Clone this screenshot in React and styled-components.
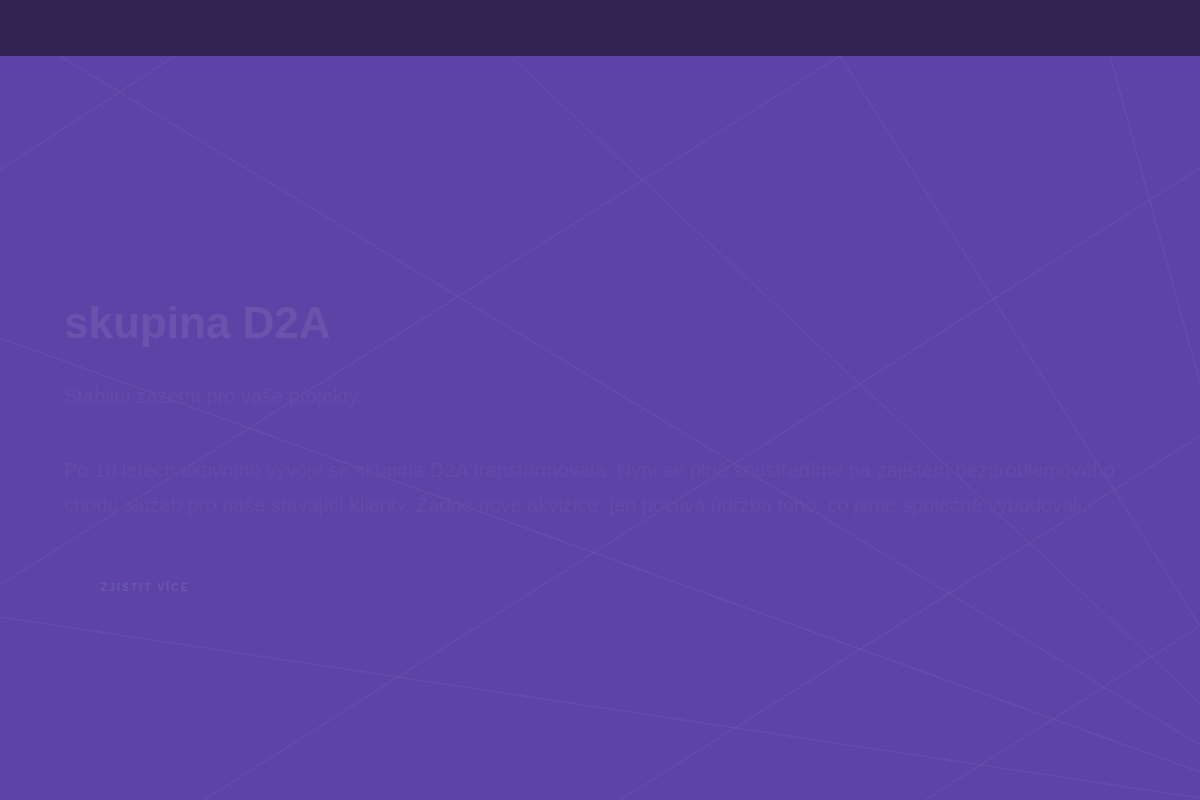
import React from 'react';
import styled, { createGlobalStyle } from 'styled-components';

// background mesh, in page coordinates (hero starts at y = 56)
const meshLines = [
  [60, 56, 1200, 745],
  [175, 56, 0, 170],
  [840, 56, 0, 585],
  [510, 56, 1200, 703],
  [840, 56, 1200, 626],
  [1110, 56, 1200, 383],
  [1200, 168, 204, 800],
  [0, 338, 1200, 772],
  [1200, 436, 620, 800],
  [0, 617, 1200, 798],
  [1200, 626, 925, 800],
];

const GlobalStyle = createGlobalStyle`
  * {
    box-sizing: border-box;
  }
  html, body {
    margin: 0;
    padding: 0;
    background: #5e43a6;
    font-family: "Liberation Sans", Arial, sans-serif;
  }
`;

const Page = styled.div`
  display: flex;
  flex-direction: column;
  min-height: 800px;
`;

const TopBar = styled.header`
  height: 56px;
  flex-shrink: 0;
  background: #312452;
`;

const Hero = styled.section`
  position: relative;
  flex: 1;
  min-height: 744px;
  background: #5e43a6;
  overflow: hidden;
`;

const Mesh = styled.svg`
  position: absolute;
  inset: 0;
  width: 100%;
  height: 100%;
  pointer-events: none;
`;

const Content = styled.div`
  position: relative;
  padding: 241px 64px 0;
`;

const Title = styled.h1`
  margin: 0;
  font-size: 44px;
  line-height: 1.2;
  font-weight: 700;
  color: #6a52ad;
`;

const Tagline = styled.p`
  margin: 29px 0 0;
  font-size: 20px;
  line-height: 35px;
  color: #644aaa;
`;

const Lead = styled.p`
  margin: 39px 0 0;
  font-size: 20px;
  line-height: 35px;
  color: #6449a9;
`;

const MoreButton = styled.a`
  display: inline-flex;
  align-items: center;
  height: 48px;
  margin-top: 41px;
  padding: 0 37px;
  font-size: 10px;
  font-weight: 700;
  letter-spacing: 2.2px;
  text-transform: uppercase;
  text-decoration: none;
  color: #6a57af;
  cursor: pointer;
`;

export default function App() {
  return (
    <>
      <GlobalStyle />
      <Page>
        <TopBar />
        <Hero>
          <Mesh viewBox="0 56 1200 744" preserveAspectRatio="none">
            {meshLines.map(([x1, y1, x2, y2], i) => (
              <line
                key={i}
                x1={x1}
                y1={y1}
                x2={x2}
                y2={y2}
                stroke="rgba(255,255,255,0.07)"
                strokeWidth="1"
              />
            ))}
          </Mesh>
          <Content>
            <Title>skupina D2A</Title>
            <Tagline>Stabilní zázemí pro vaše projekty.</Tagline>
            <Lead>
              Po 10 letech aktivního vývoje se skupina D2A transformovala. Nyní se plně
              soustředíme na zajištění bezproblémového chodu služeb pro naše stávající
              klienty. Žádné nové akvizice, jen poctivá údržba toho, co jsme společně
              vybudovali.
            </Lead>
            <MoreButton>Zjistit více</MoreButton>
          </Content>
        </Hero>
      </Page>
    </>
  );
}
